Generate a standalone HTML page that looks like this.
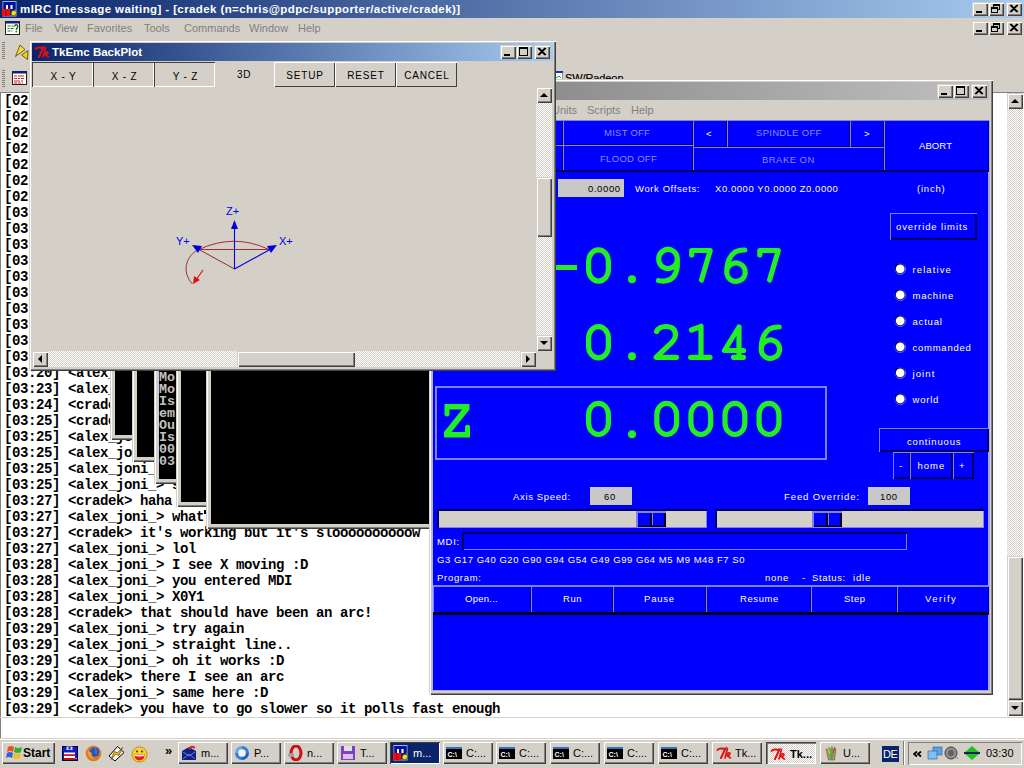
<!DOCTYPE html><html><head><meta charset="utf-8"><style>
html,body{margin:0;padding:0;width:1024px;height:768px;overflow:hidden;background:#D4D0C8;position:relative;}
div{box-sizing:border-box;}
</style></head><body>
<div style="position:absolute;left:0px;top:0px;width:1024px;height:18px;background:linear-gradient(to right,#0A246A,#A6CAF0);"></div>
<svg style="position:absolute;left:2px;top:1px" width="16" height="16"><rect x="1" y="0.5" width="13" height="14.5" fill="none" stroke="#A0B0F0" stroke-width="1"/><rect x="1.5" y="1" width="12" height="7" fill="#0010A0"/><rect x="4" y="4" width="2" height="4" fill="#fff"/><rect x="8.5" y="4" width="2" height="4" fill="#fff"/><rect x="0" y="8" width="8" height="7" fill="#F01010"/><rect x="3.5" y="8" width="1" height="7" fill="#A00000"/><path d="M9 12 Q10 8.5 13 9.5 Q15.5 11 14 13.5 Q12 15.5 9.5 14 Z" fill="#F0E020" stroke="#303000" stroke-width="0.5"/></svg>
<div style="position:absolute;left:20px;top:2px;white-space:pre;font-family:'Liberation Sans',sans-serif;font-size:11.5px;font-weight:bold;color:#fff;line-height:14px;letter-spacing:0.4px;">mIRC [message waiting] - [cradek (n=chris@pdpc/supporter/active/cradek)]</div>
<div style="position:absolute;left:972px;top:2px;width:16px;height:14px;background:#D4D0C8;box-shadow: inset 1px 1px #D4D0C8, inset 2px 2px #fff, inset -1px -1px #404040, inset -2px -2px #808080;"><svg width="16" height="14" style="position:absolute;left:0;top:0"><rect x="4" y="9" width="6" height="2" fill="#000"/></svg></div>
<div style="position:absolute;left:988px;top:2px;width:16px;height:14px;background:#D4D0C8;box-shadow: inset 1px 1px #D4D0C8, inset 2px 2px #fff, inset -1px -1px #404040, inset -2px -2px #808080;"><svg width="16" height="14" style="position:absolute;left:0;top:0"><rect x="5.5" y="2.5" width="6" height="5" fill="none" stroke="#000"/><rect x="5" y="2" width="7" height="2" fill="#000"/><rect x="3.5" y="5.5" width="6" height="5" fill="#D4D0C8" stroke="#000"/><rect x="3" y="5" width="7" height="2" fill="#000"/></svg></div>
<div style="position:absolute;left:1006px;top:2px;width:16px;height:14px;background:#D4D0C8;box-shadow: inset 1px 1px #D4D0C8, inset 2px 2px #fff, inset -1px -1px #404040, inset -2px -2px #808080;"><svg width="16" height="14" style="position:absolute;left:0;top:0"><path d="M4 3 L11 10 M5 3 L12 10 M11 3 L4 10 M12 3 L5 10" stroke="#000" stroke-width="1.2"/></svg></div>
<div style="position:absolute;left:0px;top:18px;width:1024px;height:20px;background:#D4D0C8;"></div>
<svg style="position:absolute;left:5px;top:21px" width="16" height="15"><rect x="0.5" y="0.5" width="14" height="13" fill="#fff" stroke="#202020"/><rect x="1" y="0" width="13" height="2.5" fill="#102080"/><path d="M2.5 5h3M6.5 5h2M2.5 7.5h2M5.5 7.5h3M2.5 10h3M6.5 10h1" stroke="#207020" stroke-width="1.2"/><path d="M9.5 5.5 Q10 3.5 11.5 3.8 Q13.2 4.2 12.5 6.3 Q11.5 7.5 11.3 8.8" stroke="#207020" stroke-width="1.5" fill="none"/><rect x="10.5" y="9.8" width="1.6" height="1.6" fill="#207020"/></svg>
<div style="position:absolute;left:25px;top:22px;white-space:pre;font-family:'Liberation Sans',sans-serif;font-size:11px;color:#808080;line-height:13px;">File</div>
<div style="position:absolute;left:54px;top:22px;white-space:pre;font-family:'Liberation Sans',sans-serif;font-size:11px;color:#808080;line-height:13px;">View</div>
<div style="position:absolute;left:87px;top:22px;white-space:pre;font-family:'Liberation Sans',sans-serif;font-size:11px;color:#808080;line-height:13px;">Favorites</div>
<div style="position:absolute;left:144px;top:22px;white-space:pre;font-family:'Liberation Sans',sans-serif;font-size:11px;color:#808080;line-height:13px;">Tools</div>
<div style="position:absolute;left:184px;top:22px;white-space:pre;font-family:'Liberation Sans',sans-serif;font-size:11px;color:#808080;line-height:13px;">Commands</div>
<div style="position:absolute;left:249px;top:22px;white-space:pre;font-family:'Liberation Sans',sans-serif;font-size:11px;color:#808080;line-height:13px;">Window</div>
<div style="position:absolute;left:298px;top:22px;white-space:pre;font-family:'Liberation Sans',sans-serif;font-size:11px;color:#808080;line-height:13px;">Help</div>
<div style="position:absolute;left:972px;top:21px;width:16px;height:14px;background:#D4D0C8;box-shadow: inset 1px 1px #D4D0C8, inset 2px 2px #fff, inset -1px -1px #404040, inset -2px -2px #808080;"><svg width="16" height="14" style="position:absolute;left:0;top:0"><rect x="4" y="9" width="6" height="2" fill="#000"/></svg></div>
<div style="position:absolute;left:988px;top:21px;width:16px;height:14px;background:#D4D0C8;box-shadow: inset 1px 1px #D4D0C8, inset 2px 2px #fff, inset -1px -1px #404040, inset -2px -2px #808080;"><svg width="16" height="14" style="position:absolute;left:0;top:0"><rect x="5.5" y="2.5" width="6" height="5" fill="none" stroke="#000"/><rect x="5" y="2" width="7" height="2" fill="#000"/><rect x="3.5" y="5.5" width="6" height="5" fill="#D4D0C8" stroke="#000"/><rect x="3" y="5" width="7" height="2" fill="#000"/></svg></div>
<div style="position:absolute;left:1006px;top:21px;width:16px;height:14px;background:#D4D0C8;box-shadow: inset 1px 1px #D4D0C8, inset 2px 2px #fff, inset -1px -1px #404040, inset -2px -2px #808080;"><svg width="16" height="14" style="position:absolute;left:0;top:0"><path d="M4 3 L11 10 M5 3 L12 10 M11 3 L4 10 M12 3 L5 10" stroke="#000" stroke-width="1.2"/></svg></div>
<div style="position:absolute;left:0px;top:38px;width:1024px;height:54px;background:#D4D0C8;"></div>
<svg style="position:absolute;left:2px;top:42px" width="4" height="18"><rect x="0" y="0" width="3" height="1" fill="#808080"/><rect x="0" y="2" width="3" height="1" fill="#808080"/><rect x="0" y="4" width="3" height="1" fill="#808080"/><rect x="0" y="6" width="3" height="1" fill="#808080"/><rect x="0" y="8" width="3" height="1" fill="#808080"/><rect x="0" y="10" width="3" height="1" fill="#808080"/><rect x="0" y="12" width="3" height="1" fill="#808080"/><rect x="0" y="14" width="3" height="1" fill="#808080"/><rect x="0" y="16" width="3" height="1" fill="#808080"/></svg>
<svg style="position:absolute;left:2px;top:70px" width="4" height="18"><rect x="0" y="0" width="3" height="1" fill="#808080"/><rect x="0" y="2" width="3" height="1" fill="#808080"/><rect x="0" y="4" width="3" height="1" fill="#808080"/><rect x="0" y="6" width="3" height="1" fill="#808080"/><rect x="0" y="8" width="3" height="1" fill="#808080"/><rect x="0" y="10" width="3" height="1" fill="#808080"/><rect x="0" y="12" width="3" height="1" fill="#808080"/><rect x="0" y="14" width="3" height="1" fill="#808080"/><rect x="0" y="16" width="3" height="1" fill="#808080"/></svg>
<svg style="position:absolute;left:14px;top:43px" width="16" height="18"><path d="M1.5 13.5 L6 2 L11 6.5 Z" fill="#F0E030" stroke="#504000" stroke-width="0.8"/><path d="M7.5 12 L14 7.5 L13.5 16.5 Z" fill="#F0D020" stroke="#504000" stroke-width="0.8"/></svg>
<svg style="position:absolute;left:12px;top:71px" width="16" height="15"><rect x="0.5" y="0.5" width="14" height="13" fill="#fff" stroke="#202020"/><rect x="1" y="0" width="13" height="2.5" fill="#102080"/><path d="M2 5h3M6 5h6M2 7.5h3M6 7.5h2M9 7.5h3M2 10h6M9 10h2M2 12h3M6 12h3M10 12h1" stroke="#D02020" stroke-width="1"/></svg>
<div style="position:absolute;left:0px;top:92px;width:1024px;height:626px;background:#fff;border-top:1px solid #808080;border-left:1px solid #808080;"></div>
<div style="position:absolute;left:4px;top:93px;font-family:'Liberation Mono',monospace;font-weight:bold;font-size:14px;letter-spacing:-0.4px;line-height:16px;color:#000;white-space:pre;"><div style="height:16px">[02:40] &lt;alex_joni_&gt; something here</div><div style="height:16px">[02:41] &lt;alex_joni_&gt; something here</div><div style="height:16px">[02:42] &lt;alex_joni_&gt; something here</div><div style="height:16px">[02:43] &lt;alex_joni_&gt; something here</div><div style="height:16px">[02:44] &lt;alex_joni_&gt; something here</div><div style="height:16px">[02:45] &lt;alex_joni_&gt; something here</div><div style="height:16px">[02:46] &lt;alex_joni_&gt; something here</div><div style="height:16px">[03:00] &lt;cradek&gt; something else</div><div style="height:16px">[03:01] &lt;cradek&gt; something else</div><div style="height:16px">[03:02] &lt;cradek&gt; something else</div><div style="height:16px">[03:03] &lt;cradek&gt; something else</div><div style="height:16px">[03:04] &lt;cradek&gt; something else</div><div style="height:16px">[03:05] &lt;cradek&gt; something else</div><div style="height:16px">[03:06] &lt;cradek&gt; something else</div><div style="height:16px">[03:07] &lt;cradek&gt; something else</div><div style="height:16px">[03:08] &lt;cradek&gt; something else</div><div style="height:16px">[03:09] &lt;cradek&gt; something else</div><div style="height:16px">[03:20] &lt;alex_joni_&gt; hmm</div><div style="height:16px">[03:23] &lt;alex_joni_&gt; hmm</div><div style="height:16px">[03:24] &lt;cradek&gt; ok</div><div style="height:16px">[03:25] &lt;cradek&gt; ok</div><div style="height:16px">[03:25] &lt;alex_joni_&gt; ok</div><div style="height:16px">[03:25] &lt;alex_joni_&gt; ok</div><div style="height:16px">[03:25] &lt;alex_joni_&gt; ok</div><div style="height:16px">[03:25] &lt;alex_joni_&gt; s</div><div style="height:16px">[03:27] &lt;cradek&gt; haha</div><div style="height:16px">[03:27] &lt;alex_joni_&gt; what&#x27;s up</div><div style="height:16px">[03:27] &lt;cradek&gt; it&#x27;s working but it&#x27;s sloooooooooow</div><div style="height:16px">[03:27] &lt;alex_joni_&gt; lol</div><div style="height:16px">[03:28] &lt;alex_joni_&gt; I see X moving :D</div><div style="height:16px">[03:28] &lt;alex_joni_&gt; you entered MDI</div><div style="height:16px">[03:28] &lt;alex_joni_&gt; X0Y1</div><div style="height:16px">[03:28] &lt;cradek&gt; that should have been an arc!</div><div style="height:16px">[03:29] &lt;alex_joni_&gt; try again</div><div style="height:16px">[03:29] &lt;alex_joni_&gt; straight line..</div><div style="height:16px">[03:29] &lt;alex_joni_&gt; oh it works :D</div><div style="height:16px">[03:29] &lt;cradek&gt; there I see an arc</div><div style="height:16px">[03:29] &lt;alex_joni_&gt; same here :D</div><div style="height:16px">[03:29] &lt;cradek&gt; you have to go slower so it polls fast enough</div></div>
<div style="position:absolute;left:204px;top:510px;width:2px;height:4px;background:#000;"></div>
<div style="position:absolute;left:1007px;top:93px;width:16px;height:623px;background:repeating-conic-gradient(#fff 0 25%, #D4D0C8 0 50%) 0 0/2px 2px;"></div>
<div style="position:absolute;left:1007px;top:93px;width:16px;height:16px;background:#D4D0C8;box-shadow: inset 1px 1px #D4D0C8, inset 2px 2px #fff, inset -1px -1px #404040, inset -2px -2px #808080;"><svg width="16" height="16" style="position:absolute"><path d="M4 10 L8 6 L12 10 Z" fill="#000"/></svg></div>
<div style="position:absolute;left:1007px;top:556px;width:16px;height:144px;background:#D4D0C8;box-shadow: inset 1px 1px #D4D0C8, inset 2px 2px #fff, inset -1px -1px #404040, inset -2px -2px #808080;"></div>
<div style="position:absolute;left:1007px;top:700px;width:16px;height:16px;background:#D4D0C8;box-shadow: inset 1px 1px #D4D0C8, inset 2px 2px #fff, inset -1px -1px #404040, inset -2px -2px #808080;"><svg width="16" height="16" style="position:absolute"><path d="M4 6 L8 10 L12 6 Z" fill="#000"/></svg></div>
<div style="position:absolute;left:0px;top:717px;width:1024px;height:1px;background:#D4D0C8;"></div>
<div style="position:absolute;left:0px;top:718px;width:1024px;height:20px;background:#fff;border-left:1px solid #808080;"></div>
<div style="position:absolute;left:0px;top:738px;width:1024px;height:30px;background:#D4D0C8;box-shadow: inset 0 1px #D4D0C8, inset 0 2px #fff;"></div>
<div style="position:absolute;left:2px;top:742px;width:53px;height:22px;background:#D4D0C8;box-shadow: inset 1px 1px #D4D0C8, inset 2px 2px #fff, inset -1px -1px #404040, inset -2px -2px #808080;box-shadow: inset 1px 1px #fff, inset -1px -1px #404040, inset -2px -2px #808080;"><svg width="18" height="16" style="position:absolute;left:4px;top:3px"><path d="M2 2 Q5 0 8 2 L7 7 Q4 5 1 7 Z" fill="#F05020"/><path d="M9 2 Q12 4 16 2 L15 7 Q12 9 8 7 Z" fill="#30B030"/><path d="M1 8 Q4 6 7 8 L6 13 Q3 11 0 13 Z" fill="#3060E0"/><path d="M8 8 Q11 10 15 8 L14 13 Q11 15 7 13 Z" fill="#F0C020"/></svg><div style="position:absolute;left:21px;top:4px;white-space:pre;font-family:'Liberation Sans',sans-serif;font-size:12px;font-weight:bold;color:#000;line-height:14px;">Start</div></div>
<svg style="position:absolute;left:62px;top:746px" width="16" height="16"><rect x="0.5" y="0.5" width="15" height="14" fill="#1020C0" stroke="#000030"/><rect x="4.5" y="0.5" width="6" height="3.5" fill="#D0D8FF"/><rect x="6.5" y="1" width="2" height="2.5" fill="#1020C0"/><rect x="2" y="6.5" width="11" height="2" fill="#fff"/><rect x="2" y="8.5" width="11" height="1.5" fill="#E01010"/><rect x="2" y="10" width="11" height="2" fill="#fff"/><rect x="2" y="12" width="11" height="2" fill="#C01010"/><rect x="13.5" y="12" width="1" height="1" fill="#fff"/></svg>
<svg style="position:absolute;left:85px;top:745px" width="17" height="17"><circle cx="8.5" cy="8.5" r="7.8" fill="#E07818"/><circle cx="9.5" cy="7" r="4.8" fill="#2858B8"/><path d="M2.5 5 Q2.5 14 10 14.5 Q6 11.5 6.5 7.5 Q5 8 2.5 5 Z" fill="#F0A040"/><path d="M9 2 Q12 4 11 9" stroke="#5090E0" fill="none"/></svg>
<svg style="position:absolute;left:108px;top:745px" width="17" height="17"><path d="M1 11 L9.5 1.5 L16 7.5 L7 16 Z" fill="#F4F4F4" stroke="#000" stroke-width="1"/><path d="M3 14.5 L6.5 6.5 L9.5 8 L14.5 2.5 L11 10.5 L8 9 Z" fill="#F0C020" stroke="#604000" stroke-width="0.7"/></svg>
<svg style="position:absolute;left:131px;top:746px" width="17" height="17"><circle cx="8.5" cy="8.5" r="7.6" fill="#F8D030" stroke="#B08000" stroke-width="0.8"/><circle cx="6" cy="5.5" r="1" fill="#303030"/><circle cx="11" cy="5.5" r="1" fill="#303030"/><path d="M3.2 8.3 Q8.5 9 13.8 8.3 Q13.3 14.5 8.5 14.5 Q3.7 14.5 3.2 8.3 Z" fill="#E02020"/><path d="M3.5 8.5 Q8.5 9.3 13.5 8.5 L13.2 10 Q8.5 10.8 3.8 10 Z" fill="#fff"/></svg>
<div style="position:absolute;left:165px;top:744px;white-space:pre;font-family:'Liberation Sans',sans-serif;font-size:13px;font-weight:bold;color:#000;line-height:14px;">&raquo;</div>
<div style="position:absolute;left:178px;top:742px;width:50px;height:22px;background:#D4D0C8;box-shadow: inset 1px 1px #fff, inset -1px -1px #404040, inset -2px -2px #808080;"><svg width="16" height="16" style="position:absolute;left:3px;top:3px"><path d="M1 6 L8 2 L15 6 L15 15 L1 15 Z" fill="#102080"/><path d="M2 14 L8 9 L14 14 M2 7 L8 11 L14 7" stroke="#6080E0" fill="none"/><path d="M8 4 Q11 0 14 3" stroke="#E02020" stroke-width="2" fill="none"/></svg><div style="position:absolute;left:23px;top:4px;white-space:pre;font-family:'Liberation Sans',sans-serif;font-size:11px;color:#000;font-weight:normal;line-height:14px;">m...</div></div>
<div style="position:absolute;left:231px;top:742px;width:50px;height:22px;background:#D4D0C8;box-shadow: inset 1px 1px #fff, inset -1px -1px #404040, inset -2px -2px #808080;"><svg width="16" height="16" style="position:absolute;left:3px;top:3px"><path d="M8 1 A7 7 0 0 1 15 8 L12 8 A4 4 0 0 0 8 4 Z" fill="#3080E0"/><path d="M8 15 A7 7 0 0 1 1 8 L4 8 A4 4 0 0 0 8 12 Z" fill="#3080E0"/><path d="M1 8 A7 7 0 0 1 8 1 L8 4 A4 4 0 0 0 4 8 Z" fill="#60A8F0"/><path d="M15 8 A7 7 0 0 1 8 15 L8 12 A4 4 0 0 0 12 8 Z" fill="#2060C0"/><rect x="5" y="5" width="6" height="6" fill="#F0F4FF"/></svg><div style="position:absolute;left:23px;top:4px;white-space:pre;font-family:'Liberation Sans',sans-serif;font-size:11px;color:#000;font-weight:normal;line-height:14px;">P...</div></div>
<div style="position:absolute;left:284px;top:742px;width:50px;height:22px;background:#D4D0C8;box-shadow: inset 1px 1px #fff, inset -1px -1px #404040, inset -2px -2px #808080;"><svg width="16" height="16" style="position:absolute;left:3px;top:3px"><ellipse cx="9" cy="8" rx="5" ry="7" fill="none" stroke="#D01010" stroke-width="3"/><ellipse cx="4" cy="10" rx="3" ry="2" fill="#A0A0A0"/></svg><div style="position:absolute;left:23px;top:4px;white-space:pre;font-family:'Liberation Sans',sans-serif;font-size:11px;color:#000;font-weight:normal;line-height:14px;">n...</div></div>
<div style="position:absolute;left:337px;top:742px;width:50px;height:22px;background:#D4D0C8;box-shadow: inset 1px 1px #fff, inset -1px -1px #404040, inset -2px -2px #808080;"><svg width="16" height="16" style="position:absolute;left:3px;top:3px"><rect x="1" y="1" width="14" height="14" fill="#8040C0"/><rect x="3" y="9" width="10" height="5" fill="#E0C0E0"/><rect x="4" y="1" width="8" height="5" fill="#E0E0E0"/></svg><div style="position:absolute;left:23px;top:4px;white-space:pre;font-family:'Liberation Sans',sans-serif;font-size:11px;color:#000;font-weight:normal;line-height:14px;">T...</div></div>
<div style="position:absolute;left:390px;top:742px;width:50px;height:22px;background:#0A246A;box-shadow: inset 1px 1px #404040, inset -1px -1px #fff;"><svg width="16" height="16" style="position:absolute;left:3px;top:3px"><rect x="1" y="0.5" width="13" height="14.5" fill="none" stroke="#A0B0F0" stroke-width="1"/><rect x="1.5" y="1" width="12" height="7" fill="#0010A0"/><rect x="4" y="4" width="2" height="4" fill="#fff"/><rect x="8.5" y="4" width="2" height="4" fill="#fff"/><rect x="0" y="8" width="8" height="7" fill="#F01010"/><rect x="3.5" y="8" width="1" height="7" fill="#A00000"/><path d="M9 12 Q10 8.5 13 9.5 Q15.5 11 14 13.5 Q12 15.5 9.5 14 Z" fill="#F0E020" stroke="#303000" stroke-width="0.5"/></svg><div style="position:absolute;left:23px;top:4px;white-space:pre;font-family:'Liberation Sans',sans-serif;font-size:11px;color:#fff;font-weight:normal;line-height:14px;">m...</div></div>
<div style="position:absolute;left:443px;top:742px;width:50px;height:22px;background:#D4D0C8;box-shadow: inset 1px 1px #fff, inset -1px -1px #404040, inset -2px -2px #808080;"><svg width="16" height="16" style="position:absolute;left:3px;top:3px"><rect x="0" y="2" width="16" height="12" fill="#000"/><rect x="0" y="2" width="16" height="2" fill="#3070C0"/><text x="1.5" y="12" font-size="7" font-weight="bold" fill="#fff" font-family="Liberation Sans">C:\</text></svg><div style="position:absolute;left:23px;top:4px;white-space:pre;font-family:'Liberation Sans',sans-serif;font-size:11px;color:#000;font-weight:normal;line-height:14px;">C:...</div></div>
<div style="position:absolute;left:496px;top:742px;width:50px;height:22px;background:#D4D0C8;box-shadow: inset 1px 1px #fff, inset -1px -1px #404040, inset -2px -2px #808080;"><svg width="16" height="16" style="position:absolute;left:3px;top:3px"><rect x="0" y="2" width="16" height="12" fill="#000"/><rect x="0" y="2" width="16" height="2" fill="#3070C0"/><text x="1.5" y="12" font-size="7" font-weight="bold" fill="#fff" font-family="Liberation Sans">C:\</text></svg><div style="position:absolute;left:23px;top:4px;white-space:pre;font-family:'Liberation Sans',sans-serif;font-size:11px;color:#000;font-weight:normal;line-height:14px;">C:...</div></div>
<div style="position:absolute;left:550px;top:742px;width:50px;height:22px;background:#D4D0C8;box-shadow: inset 1px 1px #fff, inset -1px -1px #404040, inset -2px -2px #808080;"><svg width="16" height="16" style="position:absolute;left:3px;top:3px"><rect x="0" y="2" width="16" height="12" fill="#000"/><rect x="0" y="2" width="16" height="2" fill="#3070C0"/><text x="1.5" y="12" font-size="7" font-weight="bold" fill="#fff" font-family="Liberation Sans">C:\</text></svg><div style="position:absolute;left:23px;top:4px;white-space:pre;font-family:'Liberation Sans',sans-serif;font-size:11px;color:#000;font-weight:normal;line-height:14px;">C:...</div></div>
<div style="position:absolute;left:604px;top:742px;width:50px;height:22px;background:#D4D0C8;box-shadow: inset 1px 1px #fff, inset -1px -1px #404040, inset -2px -2px #808080;"><svg width="16" height="16" style="position:absolute;left:3px;top:3px"><rect x="0" y="2" width="16" height="12" fill="#000"/><rect x="0" y="2" width="16" height="2" fill="#3070C0"/><text x="1.5" y="12" font-size="7" font-weight="bold" fill="#fff" font-family="Liberation Sans">C:\</text></svg><div style="position:absolute;left:23px;top:4px;white-space:pre;font-family:'Liberation Sans',sans-serif;font-size:11px;color:#000;font-weight:normal;line-height:14px;">C:...</div></div>
<div style="position:absolute;left:658px;top:742px;width:50px;height:22px;background:#D4D0C8;box-shadow: inset 1px 1px #fff, inset -1px -1px #404040, inset -2px -2px #808080;"><svg width="16" height="16" style="position:absolute;left:3px;top:3px"><rect x="0" y="2" width="16" height="12" fill="#000"/><rect x="0" y="2" width="16" height="2" fill="#3070C0"/><text x="1.5" y="12" font-size="7" font-weight="bold" fill="#fff" font-family="Liberation Sans">C:\</text></svg><div style="position:absolute;left:23px;top:4px;white-space:pre;font-family:'Liberation Sans',sans-serif;font-size:11px;color:#000;font-weight:normal;line-height:14px;">C:...</div></div>
<div style="position:absolute;left:712px;top:742px;width:50px;height:22px;background:#D4D0C8;box-shadow: inset 1px 1px #fff, inset -1px -1px #404040, inset -2px -2px #808080;"><svg width="18" height="16" style="position:absolute;left:4px;top:3px"><path d="M1.5 5 Q3 3 6 3.5 Q8 4 9.5 3.5 L5 13" stroke="#E01010" stroke-width="2" fill="none" stroke-linecap="round"/><path d="M11.5 3.5 L9 13 M10 9.5 Q13.5 6.5 14 8.5 Q13.5 10.5 11 10.5 L14.5 13" stroke="#E01010" stroke-width="1.6" fill="none" stroke-linecap="round"/></svg><div style="position:absolute;left:23px;top:4px;white-space:pre;font-family:'Liberation Sans',sans-serif;font-size:11px;color:#000;font-weight:normal;line-height:14px;">Tk...</div></div>
<div style="position:absolute;left:766px;top:742px;width:50px;height:22px;background:repeating-conic-gradient(#fff 0 25%, #D4D0C8 0 50%) 0 0/2px 2px;box-shadow: inset 1px 1px #404040, inset 2px 2px #808080, inset -1px -1px #fff;"><svg width="18" height="16" style="position:absolute;left:4px;top:4px"><path d="M1.5 5 Q3 3 6 3.5 Q8 4 9.5 3.5 L5 13" stroke="#E01010" stroke-width="2" fill="none" stroke-linecap="round"/><path d="M11.5 3.5 L9 13 M10 9.5 Q13.5 6.5 14 8.5 Q13.5 10.5 11 10.5 L14.5 13" stroke="#E01010" stroke-width="1.6" fill="none" stroke-linecap="round"/></svg><div style="position:absolute;left:24px;top:5px;white-space:pre;font-family:'Liberation Sans',sans-serif;font-size:11px;color:#000;font-weight:bold;line-height:14px;">Tk...</div></div>
<div style="position:absolute;left:820px;top:742px;width:50px;height:22px;background:#D4D0C8;box-shadow: inset 1px 1px #fff, inset -1px -1px #404040, inset -2px -2px #808080;"><svg width="16" height="16" style="position:absolute;left:3px;top:3px"><path d="M3 4 L13 4 L11.5 15 L5.5 15 Z" fill="#B89070" stroke="#705030" stroke-width="0.6"/><path d="M6 2 L8 14 M9 1 L8.5 14 M11 3 L9 14" stroke="#40B040" stroke-width="1.3"/><path d="M5 3 L7 9" stroke="#E0C020" stroke-width="1.3"/><path d="M12 2 L10 8" stroke="#D04040" stroke-width="1.2"/></svg><div style="position:absolute;left:23px;top:4px;white-space:pre;font-family:'Liberation Sans',sans-serif;font-size:11px;color:#000;font-weight:normal;line-height:14px;">U...</div></div>
<div style="position:absolute;left:882px;top:746px;width:17px;height:16px;background:#0A246A;"><div style="position:absolute;left:1px;top:1px;white-space:pre;font-family:'Liberation Sans',sans-serif;font-size:11px;color:#fff;line-height:14px;letter-spacing:-0.5px;">DE</div></div>
<div style="position:absolute;left:903px;top:741px;width:2px;height:24px;box-shadow: inset 1px 0 #808080, inset -1px 0 #fff;"></div>
<div style="position:absolute;left:908px;top:742px;width:114px;height:23px;background:#D4D0C8;box-shadow: inset 1px 1px #808080, inset -1px -1px #fff;"><svg width="10" height="8" style="position:absolute;left:5px;top:9px"><path d="M4 0.5 L1 3 L4 5.5 M8 0.5 L5 3 L8 5.5" stroke="#000" stroke-width="1.8" fill="none"/></svg><svg width="16" height="16" style="position:absolute;left:19px;top:4px"><rect x="6" y="1" width="9" height="8" fill="#60A0E0" stroke="#2060A0" stroke-width="0.6"/><rect x="1" y="5" width="9" height="8" fill="#80C0F0" stroke="#2060A0" stroke-width="0.6"/></svg><svg width="16" height="16" style="position:absolute;left:36px;top:4px"><circle cx="7" cy="7" r="6" fill="#909090" stroke="#404040"/><circle cx="7" cy="7" r="3" fill="#606060"/><path d="M10 12 Q13 10 14 13" stroke="#8080C0" fill="none"/></svg><svg width="16" height="16" style="position:absolute;left:56px;top:3px"><path d="M8 1 L15 7 L1 7 Z" fill="#20C020"/><path d="M1 9 L15 9 L8 15 Z" fill="#20C020"/><rect x="0" y="7" width="16" height="2" fill="#102060"/></svg><div style="position:absolute;left:78px;top:4px;white-space:pre;font-family:'Liberation Sans',sans-serif;font-size:11px;color:#000;line-height:14px;">03:30</div></div>
<div style="position:absolute;left:555px;top:62px;width:437px;height:17px;background:#D4D0C8;overflow:hidden;"><svg width="8" height="10" style="position:absolute;left:0;top:9px"><rect x="0" y="0" width="8" height="10" fill="#fff" stroke="#000" stroke-width="0.8"/><rect x="0" y="0" width="8" height="2" fill="#1830C0"/><path d="M1 7 L4 5 L6 7" stroke="#20A020" fill="none"/></svg><div style="position:absolute;left:10px;top:10px;white-space:pre;font-family:'Liberation Sans',sans-serif;font-size:11px;color:#000;line-height:13px;letter-spacing:-0.1px;-webkit-text-stroke:0.2px #000;">SW/Radeon</div></div>
<div style="position:absolute;left:110px;top:340px;width:400px;height:100px;background:#D4D0C8;box-shadow: inset 1px 0 #D4D0C8, inset 2px 0 #fff, inset -1px -1px #404040, inset -2px -2px #808080;"></div><div style="position:absolute;left:115px;top:340px;width:391px;height:95px;background:#000;overflow:hidden;"></div>
<div style="position:absolute;left:132px;top:340px;width:400px;height:122px;background:#D4D0C8;box-shadow: inset 1px 0 #D4D0C8, inset 2px 0 #fff, inset -1px -1px #404040, inset -2px -2px #808080;"></div><div style="position:absolute;left:137px;top:340px;width:391px;height:117px;background:#000;overflow:hidden;"></div>
<div style="position:absolute;left:154px;top:340px;width:400px;height:144px;background:#D4D0C8;box-shadow: inset 1px 0 #D4D0C8, inset 2px 0 #fff, inset -1px -1px #404040, inset -2px -2px #808080;"></div><div style="position:absolute;left:159px;top:340px;width:391px;height:139px;background:#000;overflow:hidden;"><div style="position:absolute;left:0;top:32px;font-family:'Liberation Mono',monospace;font-size:13.333px;font-weight:bold;line-height:12px;color:#C0C0C0;white-space:pre;">Mo
Mo
Is
em
Ou
Is
00
03</div></div>
<div style="position:absolute;left:176px;top:340px;width:400px;height:167px;background:#D4D0C8;box-shadow: inset 1px 0 #D4D0C8, inset 2px 0 #fff, inset -1px -1px #404040, inset -2px -2px #808080;"></div><div style="position:absolute;left:181px;top:340px;width:391px;height:162px;background:#000;overflow:hidden;"></div>
<div style="position:absolute;left:206px;top:340px;width:400px;height:189px;background:#D4D0C8;box-shadow: inset 1px 0 #D4D0C8, inset 2px 0 #fff, inset -1px -1px #404040, inset -2px -2px #808080;"></div><div style="position:absolute;left:211px;top:340px;width:391px;height:184px;background:#000;overflow:hidden;"></div>
<div style="position:absolute;left:429px;top:79px;width:564px;height:616px;background:#D4D0C8;box-shadow: inset 1px 1px #D4D0C8, inset 2px 2px #fff, inset -1px -1px #404040, inset -2px -2px #808080;"></div>
<div style="position:absolute;left:433px;top:82px;width:556px;height:18px;background:linear-gradient(to right,#808080,#C0C0C0);"></div>
<div style="position:absolute;left:937px;top:84px;width:16px;height:14px;background:#D4D0C8;box-shadow: inset 1px 1px #D4D0C8, inset 2px 2px #fff, inset -1px -1px #404040, inset -2px -2px #808080;"><svg width="16" height="14" style="position:absolute;left:0;top:0"><rect x="4" y="9" width="6" height="2" fill="#000"/></svg></div>
<div style="position:absolute;left:953px;top:84px;width:16px;height:14px;background:#D4D0C8;box-shadow: inset 1px 1px #D4D0C8, inset 2px 2px #fff, inset -1px -1px #404040, inset -2px -2px #808080;"><svg width="16" height="14" style="position:absolute;left:0;top:0"><rect x="3.5" y="2.5" width="8" height="8" fill="none" stroke="#000"/><rect x="3" y="2" width="9" height="2" fill="#000"/></svg></div>
<div style="position:absolute;left:971px;top:84px;width:16px;height:14px;background:#D4D0C8;box-shadow: inset 1px 1px #D4D0C8, inset 2px 2px #fff, inset -1px -1px #404040, inset -2px -2px #808080;"><svg width="16" height="14" style="position:absolute;left:0;top:0"><path d="M4 3 L11 10 M5 3 L12 10 M11 3 L4 10 M12 3 L5 10" stroke="#000" stroke-width="1.2"/></svg></div>
<div style="position:absolute;left:477px;top:104px;white-space:pre;font-family:'Liberation Sans',sans-serif;font-size:11px;color:#808080;line-height:13px;">File</div>
<div style="position:absolute;left:510px;top:104px;white-space:pre;font-family:'Liberation Sans',sans-serif;font-size:11px;color:#808080;line-height:13px;">Machine</div>
<div style="position:absolute;left:552px;top:104px;white-space:pre;font-family:'Liberation Sans',sans-serif;font-size:11px;color:#808080;line-height:13px;">Units</div>
<div style="position:absolute;left:587px;top:104px;white-space:pre;font-family:'Liberation Sans',sans-serif;font-size:11px;color:#808080;line-height:13px;">Scripts</div>
<div style="position:absolute;left:631px;top:104px;white-space:pre;font-family:'Liberation Sans',sans-serif;font-size:11px;color:#808080;line-height:13px;">Help</div>
<div style="position:absolute;left:431px;top:120px;width:559px;height:571px;background:#0000FF;box-shadow: inset 2px 0 #B0B0F8, inset -2px -1px #A8A8FF;"></div>
<div style="position:absolute;left:433px;top:120px;width:130px;height:25px;background:#0000FF;box-shadow: inset 1px 1px #8080FF, inset -1px -1px #000060;"></div>
<div style="position:absolute;left:563px;top:120px;width:130px;height:25px;background:#0000FF;box-shadow: inset 1px 1px #8080FF, inset -1px -1px #000060;"></div>
<div style="position:absolute;left:433px;top:145px;width:130px;height:26px;background:#0000FF;box-shadow: inset 1px 1px #8080FF, inset -1px -1px #000060;"></div>
<div style="position:absolute;left:563px;top:145px;width:130px;height:26px;background:#0000FF;box-shadow: inset 1px 1px #8080FF, inset -1px -1px #000060;"></div>
<div style="position:absolute;left:693px;top:120px;width:34px;height:27px;background:#0000FF;box-shadow: inset 1px 1px #8080FF, inset -1px -1px #000060;"></div>
<div style="position:absolute;left:727px;top:120px;width:123px;height:27px;background:#0000FF;box-shadow: inset 1px 1px #8080FF, inset -1px -1px #000060;"></div>
<div style="position:absolute;left:850px;top:120px;width:34px;height:27px;background:#0000FF;box-shadow: inset 1px 1px #8080FF, inset -1px -1px #000060;"></div>
<div style="position:absolute;left:693px;top:147px;width:191px;height:24px;background:#0000FF;box-shadow: inset 1px 1px #8080FF, inset -1px -1px #000060;"></div>
<div style="position:absolute;left:884px;top:120px;width:105px;height:51px;background:#0000FF;box-shadow: inset 1px 1px #8080FF, inset -1px -1px #000060;"></div>
<div style="position:absolute;left:433px;top:170px;width:556px;height:2px;background:#000060;"></div>
<div style="position:absolute;left:604px;top:126px;white-space:pre;font-family:'Liberation Sans',sans-serif;font-size:9.5px;line-height:13px;letter-spacing:0.25px;color:#8C8CF4;">MIST OFF</div>
<div style="position:absolute;left:600px;top:152px;white-space:pre;font-family:'Liberation Sans',sans-serif;font-size:9.5px;line-height:13px;letter-spacing:0.30000000000000004px;color:#8C8CF4;">FLOOD OFF</div>
<div style="position:absolute;left:756px;top:126px;white-space:pre;font-family:'Liberation Sans',sans-serif;font-size:9.5px;line-height:13px;letter-spacing:0.30000000000000004px;color:#8C8CF4;">SPINDLE OFF</div>
<div style="position:absolute;left:762px;top:153px;white-space:pre;font-family:'Liberation Sans',sans-serif;font-size:9.5px;line-height:13px;letter-spacing:0.45px;color:#8C8CF4;">BRAKE ON</div>
<div style="position:absolute;left:919px;top:139px;white-space:pre;font-family:'Liberation Sans',sans-serif;font-size:9.5px;line-height:13px;letter-spacing:0.1px;color:#fff;">ABORT</div>
<div style="position:absolute;left:706px;top:127px;white-space:pre;font-family:'Liberation Sans',sans-serif;font-size:9.5px;line-height:13px;letter-spacing:0.6000000000000001px;color:#fff;">&lt;</div>
<div style="position:absolute;left:864px;top:127px;white-space:pre;font-family:'Liberation Sans',sans-serif;font-size:9.5px;line-height:13px;letter-spacing:0.6000000000000001px;color:#fff;">&gt;</div>
<div style="position:absolute;left:558px;top:179px;width:66px;height:18px;background:#C8C8C8;"></div>
<div style="position:absolute;left:588px;top:182px;white-space:pre;font-family:'Liberation Sans',sans-serif;font-size:9.5px;line-height:13px;letter-spacing:0.6000000000000001px;color:#000;">0.0000</div>
<div style="position:absolute;left:635px;top:182px;white-space:pre;font-family:'Liberation Sans',sans-serif;font-size:9.5px;line-height:13px;letter-spacing:0.6000000000000001px;color:#fff;">Work Offsets:</div>
<div style="position:absolute;left:715px;top:182px;white-space:pre;font-family:'Liberation Sans',sans-serif;font-size:9.5px;line-height:13px;letter-spacing:0.55px;color:#fff;">X0.0000 Y0.0000 Z0.0000</div>
<div style="position:absolute;left:917px;top:182px;white-space:pre;font-family:'Liberation Sans',sans-serif;font-size:9.5px;line-height:13px;letter-spacing:0.8px;color:#fff;">(inch)</div>
<div style="position:absolute;left:890px;top:213px;width:87px;height:27px;background:#0000FF;box-shadow: inset 1px 1px #8080FF, inset -2px -2px #000060;"></div>
<div style="position:absolute;left:896px;top:220px;white-space:pre;font-family:'Liberation Sans',sans-serif;font-size:9.5px;line-height:13px;letter-spacing:0.8999999999999999px;color:#fff;">override limits</div>
<svg style="position:absolute;left:0;top:0" width="1024" height="768"><g fill="none" stroke="#22EE22" stroke-width="5.2" stroke-linecap="round" stroke-linejoin="round"><path transform="translate(651.8,247)" d="M25.5 12 A9.3 9.6 0 1 1 25.5 11.9 M25.5 12 L25.5 19 Q24.2 33 13.2 34 Q8.2 34.2 6.7 33.5"/><path transform="translate(686.2,247)" d="M5.5 8 L5.5 3.5 L24 3.5 L15.3 33"/><path transform="translate(720.6,247)" d="M6.2 25.2 A9.2 9.2 0 1 0 6.2 25.1 M6.2 25 Q6.2 11 14.4 5 Q18.4 2.8 24.2 3"/><path transform="translate(754.3,247)" d="M5.5 8 L5.5 3.5 L24 3.5 L15.3 33"/><path transform="translate(651.8,324)" d="M4.7 7.5 Q7.2 2.5 14.2 2.5 Q23.7 2.5 23.7 11 Q23.7 16 16.2 22 L4.2 33.3 L24.7 33.3"/><path transform="translate(686.2,324)" d="M5.3 6 L14.8 2.3 L14.8 33.3 M4.5 33.3 L23.8 33.3"/><path transform="translate(720.6,324)" d="M18.4 3 L3.9 26.5 L22.9 26.5 M18.4 3 L18.4 33.3 M12.9 33.3 L22.9 33.3"/><path transform="translate(755.0,324)" d="M6.2 25.2 A9.2 9.2 0 1 0 6.2 25.1 M6.2 25 Q6.2 11 14.4 5 Q18.4 2.8 24.2 3"/><rect x="588.6" y="249.9" width="19.8" height="31.2" rx="9.9" ry="11.5"/><rect x="588.6" y="326.7" width="19.8" height="31.2" rx="9.9" ry="11.5"/><rect x="588.6" y="403.3" width="19.8" height="31.2" rx="9.9" ry="11.5"/><rect x="656.8" y="403.3" width="19.8" height="31.2" rx="9.9" ry="11.5"/><rect x="690.9" y="403.3" width="19.8" height="31.2" rx="9.9" ry="11.5"/><rect x="725.0" y="403.3" width="19.8" height="31.2" rx="9.9" ry="11.5"/><rect x="759.1" y="403.3" width="19.8" height="31.2" rx="9.9" ry="11.5"/></g><g fill="#22EE22"><circle cx="632" cy="279.3" r="4"/><circle cx="632" cy="356.3" r="4"/><circle cx="632" cy="434.3" r="4"/></g></svg>
<div style="position:absolute;left:556px;top:265px;width:21px;height:5px;background:#22EE22;"></div>
<div style="position:absolute;left:435px;top:386px;width:392px;height:74px;box-shadow: inset 0 0 0 2px #8080FF;"></div>
<svg style="position:absolute;left:0;top:0" width="500" height="450"><path d="M444.5 404 L469.5 404 L469.5 409.5 L451.5 432 L465 432 L465 426 Q467.5 423.5 470 426 L470 437.5 L444 437.5 L444 432 L462 409.5 L449.5 409.5 L449.5 415 Q447 418 444.5 415 Z" fill="#22EE22"/></svg>
<svg style="position:absolute;left:893px;top:262px" width="14" height="14"><circle cx="7.3" cy="7.2" r="5.3" fill="none" stroke="#7070F0" stroke-width="0.9"/><circle cx="6.8" cy="6.5" r="5" fill="#000030"/><circle cx="7.2" cy="6.8" r="4.4" fill="#FFFFF0"/></svg>
<div style="position:absolute;left:912.5px;top:263px;white-space:pre;font-family:'Liberation Sans',sans-serif;font-size:9.5px;line-height:13px;letter-spacing:1.1px;color:#fff;">relative</div>
<svg style="position:absolute;left:893px;top:288px" width="14" height="14"><circle cx="7.3" cy="7.2" r="5.3" fill="none" stroke="#7070F0" stroke-width="0.9"/><circle cx="6.8" cy="6.5" r="5" fill="#000030"/><circle cx="7.2" cy="6.8" r="4.4" fill="#FFFFF0"/></svg>
<div style="position:absolute;left:912.5px;top:289px;white-space:pre;font-family:'Liberation Sans',sans-serif;font-size:9.5px;line-height:13px;letter-spacing:0.8px;color:#fff;">machine</div>
<svg style="position:absolute;left:893px;top:314px" width="14" height="14"><circle cx="7.3" cy="7.2" r="5.3" fill="none" stroke="#7070F0" stroke-width="0.9"/><circle cx="6.8" cy="6.5" r="5" fill="#000030"/><circle cx="7.2" cy="6.8" r="4.4" fill="#FFFFF0"/></svg>
<div style="position:absolute;left:912.5px;top:315px;white-space:pre;font-family:'Liberation Sans',sans-serif;font-size:9.5px;line-height:13px;letter-spacing:0.8px;color:#fff;">actual</div>
<svg style="position:absolute;left:893px;top:340px" width="14" height="14"><circle cx="7.3" cy="7.2" r="5.3" fill="none" stroke="#7070F0" stroke-width="0.9"/><circle cx="6.8" cy="6.5" r="5" fill="#000030"/><circle cx="7.2" cy="6.8" r="4.4" fill="#FFFFF0"/></svg>
<div style="position:absolute;left:912.5px;top:341px;white-space:pre;font-family:'Liberation Sans',sans-serif;font-size:9.5px;line-height:13px;letter-spacing:0.75px;color:#fff;">commanded</div>
<svg style="position:absolute;left:893px;top:366px" width="14" height="14"><circle cx="7.3" cy="7.2" r="5.3" fill="none" stroke="#7070F0" stroke-width="0.9"/><circle cx="6.8" cy="6.5" r="5" fill="#000030"/><circle cx="7.2" cy="6.8" r="4.4" fill="#FFFFF0"/></svg>
<div style="position:absolute;left:912.5px;top:367px;white-space:pre;font-family:'Liberation Sans',sans-serif;font-size:9.5px;line-height:13px;letter-spacing:1.1px;color:#fff;">joint</div>
<svg style="position:absolute;left:893px;top:392px" width="14" height="14"><circle cx="7.3" cy="7.2" r="5.3" fill="none" stroke="#7070F0" stroke-width="0.9"/><circle cx="6.8" cy="6.5" r="5" fill="#000030"/><circle cx="7.2" cy="6.8" r="4.4" fill="#FFFFF0"/></svg>
<div style="position:absolute;left:912.5px;top:393px;white-space:pre;font-family:'Liberation Sans',sans-serif;font-size:9.5px;line-height:13px;letter-spacing:0.8px;color:#fff;">world</div>
<div style="position:absolute;left:879px;top:428px;width:110px;height:24px;background:#0000FF;box-shadow: inset 1px 1px #8080FF, inset -2px -2px #000060;"></div>
<div style="position:absolute;left:907px;top:434.5px;white-space:pre;font-family:'Liberation Sans',sans-serif;font-size:9.5px;line-height:13px;letter-spacing:0.8500000000000001px;color:#fff;">continuous</div>
<div style="position:absolute;left:893px;top:452px;width:18px;height:27px;background:#0000FF;box-shadow: inset 1px 1px #8080FF, inset -1px -1px #000060;box-shadow: inset 1px 1px #8080FF, inset -2px -2px #000060;"></div>
<div style="position:absolute;left:910px;top:452px;width:43px;height:27px;background:#0000FF;box-shadow: inset 1px 1px #8080FF, inset -1px -1px #000060;box-shadow: inset 1px 1px #8080FF, inset -2px -2px #000060;"></div>
<div style="position:absolute;left:953px;top:452px;width:21px;height:27px;background:#0000FF;box-shadow: inset 1px 1px #8080FF, inset -1px -1px #000060;box-shadow: inset 1px 1px #8080FF, inset -2px -2px #000060;"></div>
<div style="position:absolute;left:899px;top:459px;white-space:pre;font-family:'Liberation Sans',sans-serif;font-size:9.5px;line-height:13px;letter-spacing:0.6000000000000001px;color:#fff;">-</div>
<div style="position:absolute;left:917.5px;top:459px;white-space:pre;font-family:'Liberation Sans',sans-serif;font-size:9.5px;line-height:13px;letter-spacing:1.0px;color:#fff;">home</div>
<div style="position:absolute;left:959px;top:459px;white-space:pre;font-family:'Liberation Sans',sans-serif;font-size:9.5px;line-height:13px;letter-spacing:0.6000000000000001px;color:#fff;">+</div>
<div style="position:absolute;left:513px;top:490px;white-space:pre;font-family:'Liberation Sans',sans-serif;font-size:9.5px;line-height:13px;letter-spacing:0.65px;color:#fff;">Axis Speed:</div>
<div style="position:absolute;left:590px;top:487px;width:42px;height:18px;background:#C8C8C8;"></div>
<div style="position:absolute;left:604px;top:490px;white-space:pre;font-family:'Liberation Sans',sans-serif;font-size:9.5px;line-height:13px;letter-spacing:0.6000000000000001px;color:#000;">60</div>
<div style="position:absolute;left:784px;top:490px;white-space:pre;font-family:'Liberation Sans',sans-serif;font-size:9.5px;line-height:13px;letter-spacing:0.8999999999999999px;color:#fff;">Feed Override:</div>
<div style="position:absolute;left:868px;top:487px;width:42px;height:18px;background:#C8C8C8;"></div>
<div style="position:absolute;left:880px;top:490px;white-space:pre;font-family:'Liberation Sans',sans-serif;font-size:9.5px;line-height:13px;letter-spacing:0.6000000000000001px;color:#000;">100</div>
<div style="position:absolute;left:437px;top:509px;width:270px;height:19px;background:#D4D0C8;box-shadow: inset 2px 2px #000060, inset -1px -1px #8080FF;"></div><div style="position:absolute;left:636px;top:511px;width:30px;height:16px;background:#0000FF;box-shadow: inset 2px 2px #8080FF, inset -2px -2px #000020;"><div style="position:absolute;left:14px;top:2px;width:2px;height:12px;background:#000020;"></div><div style="position:absolute;left:16px;top:2px;width:1px;height:12px;background:#8080FF;"></div></div>
<div style="position:absolute;left:715px;top:509px;width:269px;height:19px;background:#D4D0C8;box-shadow: inset 2px 2px #000060, inset -1px -1px #8080FF;"></div><div style="position:absolute;left:812px;top:511px;width:30px;height:16px;background:#0000FF;box-shadow: inset 2px 2px #8080FF, inset -2px -2px #000020;"><div style="position:absolute;left:14px;top:2px;width:2px;height:12px;background:#000020;"></div><div style="position:absolute;left:16px;top:2px;width:1px;height:12px;background:#8080FF;"></div></div>
<div style="position:absolute;left:437px;top:535px;white-space:pre;font-family:'Liberation Sans',sans-serif;font-size:9.5px;line-height:13px;letter-spacing:0.7px;color:#fff;">MDI:</div>
<div style="position:absolute;left:462px;top:532px;width:445px;height:18px;background:#0000FF;box-shadow: inset 2px 2px #000060, inset -1px -1px #8080FF;"></div>
<div style="position:absolute;left:437px;top:553px;white-space:pre;font-family:'Liberation Sans',sans-serif;font-size:9.5px;line-height:13px;letter-spacing:0.54px;color:#fff;">G3 G17 G40 G20 G90 G94 G54 G49 G99 G64 M5 M9 M48 F7 S0</div>
<div style="position:absolute;left:437px;top:571px;white-space:pre;font-family:'Liberation Sans',sans-serif;font-size:9.5px;line-height:13px;letter-spacing:0.7px;color:#fff;">Program:</div>
<div style="position:absolute;left:765px;top:571px;white-space:pre;font-family:'Liberation Sans',sans-serif;font-size:9.5px;line-height:13px;letter-spacing:0.7px;color:#fff;">none</div>
<div style="position:absolute;left:802px;top:571px;white-space:pre;font-family:'Liberation Sans',sans-serif;font-size:9.5px;line-height:13px;letter-spacing:0.6000000000000001px;color:#fff;">-</div>
<div style="position:absolute;left:812px;top:571px;white-space:pre;font-family:'Liberation Sans',sans-serif;font-size:9.5px;line-height:13px;letter-spacing:0.6000000000000001px;color:#fff;">Status:</div>
<div style="position:absolute;left:853px;top:571px;white-space:pre;font-family:'Liberation Sans',sans-serif;font-size:9.5px;line-height:13px;letter-spacing:0.8px;color:#fff;">idle</div>
<div style="position:absolute;left:433px;top:585px;width:556px;height:1px;background:#8080FF;"></div>
<div style="position:absolute;left:433px;top:586px;width:98px;height:27px;background:#0000FF;box-shadow: inset 1px 1px #8080FF, inset -1px -1px #000060;box-shadow: inset 1px 1px #8080FF, inset -1px -1px #000060;"></div>
<div style="position:absolute;left:531px;top:586px;width:82px;height:27px;background:#0000FF;box-shadow: inset 1px 1px #8080FF, inset -1px -1px #000060;box-shadow: inset 1px 1px #8080FF, inset -1px -1px #000060;"></div>
<div style="position:absolute;left:613px;top:586px;width:93px;height:27px;background:#0000FF;box-shadow: inset 1px 1px #8080FF, inset -1px -1px #000060;box-shadow: inset 1px 1px #8080FF, inset -1px -1px #000060;"></div>
<div style="position:absolute;left:706px;top:586px;width:105px;height:27px;background:#0000FF;box-shadow: inset 1px 1px #8080FF, inset -1px -1px #000060;box-shadow: inset 1px 1px #8080FF, inset -1px -1px #000060;"></div>
<div style="position:absolute;left:811px;top:586px;width:86px;height:27px;background:#0000FF;box-shadow: inset 1px 1px #8080FF, inset -1px -1px #000060;box-shadow: inset 1px 1px #8080FF, inset -1px -1px #000060;"></div>
<div style="position:absolute;left:897px;top:586px;width:92px;height:27px;background:#0000FF;box-shadow: inset 1px 1px #8080FF, inset -1px -1px #000060;box-shadow: inset 1px 1px #8080FF, inset -1px -1px #000060;"></div>
<div style="position:absolute;left:465px;top:592px;white-space:pre;font-family:'Liberation Sans',sans-serif;font-size:9.5px;line-height:13px;letter-spacing:0.25px;color:#fff;">Open...</div>
<div style="position:absolute;left:563px;top:592px;white-space:pre;font-family:'Liberation Sans',sans-serif;font-size:9.5px;line-height:13px;letter-spacing:0.6000000000000001px;color:#fff;">Run</div>
<div style="position:absolute;left:644px;top:592px;white-space:pre;font-family:'Liberation Sans',sans-serif;font-size:9.5px;line-height:13px;letter-spacing:0.8px;color:#fff;">Pause</div>
<div style="position:absolute;left:740px;top:592px;white-space:pre;font-family:'Liberation Sans',sans-serif;font-size:9.5px;line-height:13px;letter-spacing:0.6000000000000001px;color:#fff;">Resume</div>
<div style="position:absolute;left:844px;top:592px;white-space:pre;font-family:'Liberation Sans',sans-serif;font-size:9.5px;line-height:13px;letter-spacing:0.5px;color:#fff;">Step</div>
<div style="position:absolute;left:925px;top:592px;white-space:pre;font-family:'Liberation Sans',sans-serif;font-size:9.5px;line-height:13px;letter-spacing:1.4px;color:#fff;">Verify</div>
<div style="position:absolute;left:433px;top:612px;width:556px;height:3px;background:#000020;"></div>
<div style="position:absolute;left:29px;top:40px;width:527px;height:331px;background:#D4D0C8;box-shadow: inset 1px 1px #D4D0C8, inset 2px 2px #fff, inset -1px -1px #404040, inset -2px -2px #808080;"></div>
<div style="position:absolute;left:32px;top:43px;width:521px;height:18px;background:linear-gradient(to right,#0A246A,#A6CAF0);"></div>
<svg width="18" height="16" style="position:absolute;left:34px;top:44px"><path d="M1.5 5 Q3 3 6 3.5 Q8 4 9.5 3.5 L5 13" stroke="#E01010" stroke-width="2" fill="none" stroke-linecap="round"/><path d="M11.5 3.5 L9 13 M10 9.5 Q13.5 6.5 14 8.5 Q13.5 10.5 11 10.5 L14.5 13" stroke="#E01010" stroke-width="1.6" fill="none" stroke-linecap="round"/></svg>
<div style="position:absolute;left:52px;top:45px;white-space:pre;font-family:'Liberation Sans',sans-serif;font-size:11.5px;font-weight:bold;color:#fff;line-height:14px;">TkEmc BackPlot</div>
<div style="position:absolute;left:500px;top:45px;width:16px;height:14px;background:#D4D0C8;box-shadow: inset 1px 1px #D4D0C8, inset 2px 2px #fff, inset -1px -1px #404040, inset -2px -2px #808080;"><svg width="16" height="14" style="position:absolute;left:0;top:0"><rect x="4" y="9" width="6" height="2" fill="#000"/></svg></div>
<div style="position:absolute;left:516px;top:45px;width:16px;height:14px;background:#D4D0C8;box-shadow: inset 1px 1px #D4D0C8, inset 2px 2px #fff, inset -1px -1px #404040, inset -2px -2px #808080;"><svg width="16" height="14" style="position:absolute;left:0;top:0"><rect x="3.5" y="2.5" width="8" height="8" fill="none" stroke="#000"/><rect x="3" y="2" width="9" height="2" fill="#000"/></svg></div>
<div style="position:absolute;left:534px;top:45px;width:16px;height:14px;background:#D4D0C8;box-shadow: inset 1px 1px #D4D0C8, inset 2px 2px #fff, inset -1px -1px #404040, inset -2px -2px #808080;"><svg width="16" height="14" style="position:absolute;left:0;top:0"><path d="M4 3 L11 10 M5 3 L12 10 M11 3 L4 10 M12 3 L5 10" stroke="#000" stroke-width="1.2"/></svg></div>
<div style="position:absolute;left:32px;top:62px;width:61px;height:25px;background:#D4D0C8;box-shadow: inset 1px 1px #404040, inset -1px -1px #fff;"><div style="position:absolute;left:2px;right:0;top:9px;text-align:center;font-family:'Liberation Sans',sans-serif;font-size:10px;line-height:12px;letter-spacing:0.8px;color:#000;">X - Y</div></div>
<div style="position:absolute;left:93px;top:62px;width:61px;height:25px;background:#D4D0C8;box-shadow: inset 1px 1px #404040, inset -1px -1px #fff;"><div style="position:absolute;left:2px;right:0;top:9px;text-align:center;font-family:'Liberation Sans',sans-serif;font-size:10px;line-height:12px;letter-spacing:0.8px;color:#000;">X - Z</div></div>
<div style="position:absolute;left:154px;top:62px;width:61px;height:25px;background:#D4D0C8;box-shadow: inset 1px 1px #404040, inset -1px -1px #fff;"><div style="position:absolute;left:2px;right:0;top:9px;text-align:center;font-family:'Liberation Sans',sans-serif;font-size:10px;line-height:12px;letter-spacing:0.8px;color:#000;">Y - Z</div></div>
<div style="position:absolute;left:237px;top:69px;white-space:pre;font-family:'Liberation Sans',sans-serif;font-size:10px;line-height:12px;letter-spacing:0.8px;color:#000;">3D</div>
<div style="position:absolute;left:274px;top:62px;width:61px;height:25px;background:#D4D0C8;box-shadow: inset 1px 1px #fff, inset -1px -1px #404040;"><div style="position:absolute;left:1px;right:0;top:8px;text-align:center;font-family:'Liberation Sans',sans-serif;font-size:10px;line-height:12px;letter-spacing:0.8px;color:#000;">SETUP</div></div>
<div style="position:absolute;left:335px;top:62px;width:61px;height:25px;background:#D4D0C8;box-shadow: inset 1px 1px #fff, inset -1px -1px #404040;"><div style="position:absolute;left:1px;right:0;top:8px;text-align:center;font-family:'Liberation Sans',sans-serif;font-size:10px;line-height:12px;letter-spacing:0.8px;color:#000;">RESET</div></div>
<div style="position:absolute;left:396px;top:62px;width:61px;height:25px;background:#D4D0C8;box-shadow: inset 1px 1px #fff, inset -1px -1px #404040;"><div style="position:absolute;left:1px;right:0;top:8px;text-align:center;font-family:'Liberation Sans',sans-serif;font-size:10px;line-height:12px;letter-spacing:0.8px;color:#000;">CANCEL</div></div>
<div style="position:absolute;left:536px;top:87px;width:16px;height:264px;background:repeating-conic-gradient(#fff 0 25%, #D4D0C8 0 50%) 0 0/2px 2px;"></div>
<div style="position:absolute;left:536px;top:87px;width:16px;height:16px;background:#D4D0C8;box-shadow: inset 1px 1px #D4D0C8, inset 2px 2px #fff, inset -1px -1px #404040, inset -2px -2px #808080;"><svg width="16" height="16" style="position:absolute"><path d="M4 10 L8 6 L12 10 Z" fill="#000"/></svg></div>
<div style="position:absolute;left:536px;top:177px;width:16px;height:60px;background:#D4D0C8;box-shadow: inset 1px 1px #D4D0C8, inset 2px 2px #fff, inset -1px -1px #404040, inset -2px -2px #808080;"></div>
<div style="position:absolute;left:536px;top:335px;width:16px;height:16px;background:#D4D0C8;box-shadow: inset 1px 1px #D4D0C8, inset 2px 2px #fff, inset -1px -1px #404040, inset -2px -2px #808080;"><svg width="16" height="16" style="position:absolute"><path d="M4 6 L8 10 L12 6 Z" fill="#000"/></svg></div>
<div style="position:absolute;left:32px;top:351px;width:504px;height:16px;background:repeating-conic-gradient(#fff 0 25%, #D4D0C8 0 50%) 0 0/2px 2px;"></div>
<div style="position:absolute;left:32px;top:351px;width:16px;height:16px;background:#D4D0C8;box-shadow: inset 1px 1px #D4D0C8, inset 2px 2px #fff, inset -1px -1px #404040, inset -2px -2px #808080;"><svg width="16" height="16" style="position:absolute"><path d="M10 4 L6 8 L10 12 Z" fill="#000"/></svg></div>
<div style="position:absolute;left:237px;top:351px;width:118px;height:16px;background:#D4D0C8;box-shadow: inset 1px 1px #D4D0C8, inset 2px 2px #fff, inset -1px -1px #404040, inset -2px -2px #808080;"></div>
<div style="position:absolute;left:520px;top:351px;width:16px;height:16px;background:#D4D0C8;box-shadow: inset 1px 1px #D4D0C8, inset 2px 2px #fff, inset -1px -1px #404040, inset -2px -2px #808080;"><svg width="16" height="16" style="position:absolute"><path d="M6 4 L10 8 L6 12 Z" fill="#000"/></svg></div>
<svg style="position:absolute;left:0;top:0" width="320" height="300"><path d="M199 249.5 Q234 233 269 249.5" stroke="#A03030" fill="none" stroke-width="1"/><path d="M199 249.5 L269 249.5" stroke="#A03030" stroke-width="1"/><path d="M199 249.5 L234.5 269" stroke="#803030" stroke-width="1"/><path d="M199 249.5 C186 255 181 272 192.5 284" stroke="#A03030" fill="none" stroke-width="1"/><path d="M234.5 269 L234.5 226" stroke="#0000E0" stroke-width="1.1"/><path d="M234.5 269 L270 249.5" stroke="#0000E0" stroke-width="1.1"/><path d="M234.5 220 L231 229 L238 229 Z" fill="#0000E0"/><path d="M277 245 L267 246 L271 253 Z" fill="#0000E0"/><path d="M192 245 L202 246 L198 253 Z" fill="#0000E0"/><path d="M203 270 L196 280" stroke="#E01010" stroke-width="1.2"/><path d="M193 284 L194 276 L200 280 Z" fill="#E01010"/><text x="226" y="215" font-size="11" fill="#0000E0" font-family="Liberation Sans">Z+</text><text x="176" y="245" font-size="11" fill="#0000E0" font-family="Liberation Sans">Y+</text><text x="279" y="245" font-size="11" fill="#0000E0" font-family="Liberation Sans">X+</text></svg>
</body></html>
